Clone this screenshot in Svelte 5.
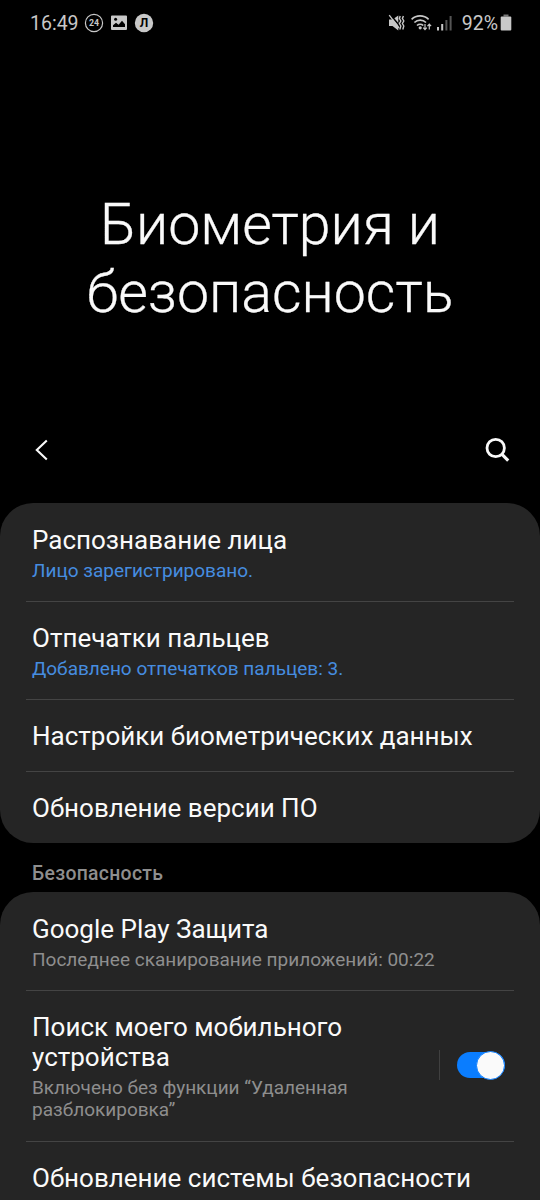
<script>
    const biometrics = [
        { title: "Распознавание лица", status: "Лицо зарегистрировано." },
        { title: "Отпечатки пальцев", status: "Добавлено отпечатков пальцев: 3." },
        { title: "Настройки биометрических данных" },
        { title: "Обновление версии ПО" }
    ];

    let findEnabled = $state(true);
</script>

<main>
    <header class="status-bar">
        <div class="status-left">
            <span class="clock">16:49</span>
            <svg width="20" height="20" viewBox="0 0 20 20">
                <circle cx="10" cy="10" r="8.6" fill="none" stroke="#c8c8c8" stroke-width="1.2" />
                <text x="10" y="13.1" text-anchor="middle" font-size="8.8" font-weight="bold" fill="#c8c8c8">24</text>
            </svg>
            <svg class="picture" width="16" height="16" viewBox="0 0 16 16">
                <path fill="#c8c8c8" fill-rule="evenodd" d="M1 0.5h14a1 1 0 0 1 1 1v12.5a1 1 0 0 1-1 1h-14a1 1 0 0 1-1-1v-12.5a1 1 0 0 1 1-1ZM2 12h12V9.2L11 5.8 7.6 9.8 5 7.8 2 10.3Z" />
                <circle cx="4.6" cy="4.3" r="1.5" fill="#000" />
            </svg>
            <svg width="20" height="20" viewBox="0 0 20 20">
                <circle cx="10" cy="10" r="9.2" fill="#c8c8c8" />
                <text x="10" y="14" text-anchor="middle" font-size="12" font-weight="bold" fill="#000">Л</text>
            </svg>
        </div>
        <div class="status-right">
            <!-- muted with vibration -->
            <svg width="17" height="18" viewBox="0 0 17 18">
                <path d="M1 5.5h3.5L10.3 1.5v15L4.5 12H1Z" fill="#c8c8c8" />
                <path d="M2.6 1 11.4 11.6" stroke="#000" stroke-width="1.6" />
                <path d="M1.2 1.2 11 14" stroke="#c8c8c8" stroke-width="1.3" />
                <path d="M12.2 2 11.4 4.5 12.8 7 11.4 9.5 12.8 12 11.8 15.5M15.4 2 14.4 4.5 15.8 7 14.4 9.5 15.8 12 14.8 15.5" fill="none" stroke="#c8c8c8" stroke-width="1.4" />
            </svg>
            <svg class="wifi" width="22" height="18" viewBox="0 0 22 18">
                <g fill="none" stroke="#c8c8c8" stroke-width="1.7">
                    <path d="M0.6 5.3A12.3 12.3 0 0 1 17.6 5.3" />
                    <path d="M3.4 8.5A8.3 8.3 0 0 1 15 8.5" />
                    <path d="M6 11.5A4.6 4.6 0 0 1 12.3 11.5" />
                </g>
                <circle cx="9.2" cy="13.8" r="1.6" fill="#c8c8c8" />
                <path d="M14 10v5.6M12.2 13.6l1.8 2 1.8-2M18.3 15.5V10.2M16.5 12.1l1.8-2 1.8 2" fill="none" stroke="#c8c8c8" stroke-width="1.2" />
            </svg>
            <svg class="signal" width="15" height="16" viewBox="0 0 15 16">
                <path d="M0 12h2v3.5h-2ZM4.2 9h2v6.5h-2Z" fill="#c8c8c8" />
                <path d="M8.4 5h2v10.5h-2ZM12.6 1h2v14.5h-2Z" fill="#555" />
            </svg>
            <span class="battery">92%</span>
            <svg width="12" height="18" viewBox="0 0 12 18">
                <path d="M3.5 0.5h5v2h-5Z" fill="#777" />
                <rect x="0.7" y="2.4" width="10.6" height="14.2" rx="1" fill="#c8c8c8" />
            </svg>
        </div>
    </header>

    <h1>Биометрия и<br>безопасность</h1>

    <nav>
        <button aria-label="Назад">
            <svg width="14" height="22" viewBox="0 0 14 22"><path d="M12.8 1.5 2.8 11 12.8 20.5" fill="none" stroke="#fafafa" stroke-width="2.1" /></svg>
        </button>
        <button aria-label="Поиск">
            <svg width="26" height="26" viewBox="0 0 26 26"><circle cx="11.7" cy="11" r="8.7" fill="none" stroke="#fafafa" stroke-width="2.8" /><path d="M17.8 17.1 24.2 23.6" stroke="#fafafa" stroke-width="3.1" /></svg>
        </button>
    </nav>

    <section class="card">
        {#each biometrics as item}
            <div class="row" class:single={!item.status}>
                <h2>{item.title}</h2>
                {#if item.status}
                    <p class="blue">{item.status}</p>
                {/if}
            </div>
        {/each}
    </section>

    <h3>Безопасность</h3>

    <section class="card security">
        <div class="row">
            <h2>Google Play Защита</h2>
            <p>Последнее сканирование приложений: 00:22</p>
        </div>
        <div class="row find">
            <div>
                <h2>Поиск моего мобильного<br>устройства</h2>
                <p>Включено без функции “Удаленная<br>разблокировка”</p>
            </div>
            <div class="switch-box">
                <button class="switch" class:on={findEnabled} aria-label="Поиск моего мобильного устройства" onclick={() => findEnabled = !findEnabled}>
                    <span class="knob"></span>
                </button>
            </div>
        </div>
        <div class="row single">
            <h2>Обновление системы безопасности</h2>
        </div>
    </section>
</main>

<style>
    :global(body){
        background: #000;
    }
    main{
        width: 540px;
        height: 1200px;
        overflow: hidden;
        background: #000;
        color: #fafafa;
        font-family: Roboto, sans-serif;
    }
    h1, h2, h3, p{
        margin: 0;
        font-weight: 400;
    }
    button{
        border: 0;
        padding: 0;
        background: none;
    }
    svg{
        display: block;
    }

    .status-bar, .status-left, .status-right, nav{
        display: flex;
        align-items: center;
    }
    .status-bar{
        height: 45px;
        padding: 0 28px 0 30px;
        justify-content: space-between;
        font-size: 19.5px;
        color: #c8c8c8;
    }
    .status-left{
        gap: 5px;
    }
    .clock, .battery{
        padding-top: 2px;
    }
    .picture{
        margin: 0 2px 0 2px;
    }
    .wifi{
        margin-left: 6px;
    }
    .signal{
        margin-left: 4px;
    }
    .battery{
        margin: 0 2px 0 10px;
    }

    h1{
        height: 380px;
        padding-top: 146px;
        box-sizing: border-box;
        text-align: center;
        font-size: 57.3px;
        font-weight: 300;
        line-height: 68px;
        -webkit-text-stroke: 0.3px #fafafa;
    }
    nav{
        height: 50px;
        padding: 0 30px 0 34px;
        justify-content: space-between;
    }

    .card{
        background: #252525;
        border-radius: 33px;
    }
    nav + .card{
        margin-top: 28px;
    }
    /* continues below the screen edge */
    .security{
        padding-bottom: 40px;
    }
    .row{
        position: relative;
        height: 98px;
        padding: 22px 26px 0 32px;
        box-sizing: border-box;
    }
    .row.single{
        height: 72px;
    }
    .row + .row::before{
        content: "";
        position: absolute;
        top: 0;
        left: 26px;
        right: 26px;
        height: 1px;
        background: #444;
    }
    h2{
        font-size: 26px;
        line-height: 30px;
    }
    p{
        margin-top: 5px;
        font-size: 19px;
        line-height: 22px;
        color: #8e8e8e;
    }
    p.blue{
        color: #468de0;
    }
    h3{
        height: 49px;
        padding: 0 32px;
        font-size: 19.4px;
        font-weight: 500;
        line-height: 62px;
        letter-spacing: 0.3px;
        color: #8e8e8e;
    }

    .find{
        height: 151px;
        display: flex;
        justify-content: space-between;
    }
    .switch-box{
        display: flex;
        align-items: center;
        justify-content: flex-end;
        box-sizing: border-box;
        width: 75px;
        height: 30px;
        margin-top: 38px;
        padding-right: 9px;
        border-left: 1px solid #404040;
    }
    .switch{
        display: flex;
        align-items: center;
        width: 48px;
        height: 26px;
        border-radius: 13px;
        background: #777;
    }
    .switch.on{
        justify-content: flex-end;
        background: #0a7dff;
    }
    .knob{
        flex: none;
        box-sizing: border-box;
        width: 29px;
        height: 29px;
        border: 1.5px solid #0a7dff;
        border-radius: 50%;
        background: #fafafa;
    }
</style>
